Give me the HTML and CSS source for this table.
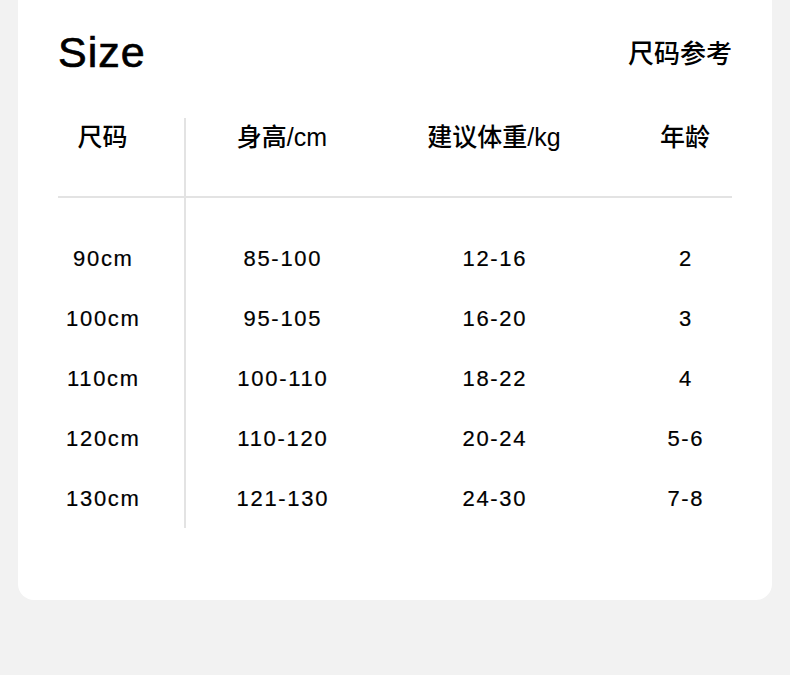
FILE: index.html
```html
<!DOCTYPE html>
<html lang="zh">
<head>
<meta charset="utf-8">
<title>Size</title>
<link rel="stylesheet" href="styles.css">
</head>
<body>
<main class="card">
  <header class="title-row">
    <h1 class="title">Size</h1>
    <span class="subtitle">尺码参考</span>
  </header>
  <div class="size-table">
    <div class="cell head first">尺码</div>
    <div class="cell head">身高/cm</div>
    <div class="cell head">建议体重/kg</div>
    <div class="cell head last">年龄</div>

    <div class="cell num first top">90cm</div>
    <div class="cell num top">85-100</div>
    <div class="cell num top">12-16</div>
    <div class="cell num last top">2</div>

    <div class="cell num first">100cm</div>
    <div class="cell num">95-105</div>
    <div class="cell num">16-20</div>
    <div class="cell num last">3</div>

    <div class="cell num first">110cm</div>
    <div class="cell num">100-110</div>
    <div class="cell num">18-22</div>
    <div class="cell num last">4</div>

    <div class="cell num first">120cm</div>
    <div class="cell num">110-120</div>
    <div class="cell num">20-24</div>
    <div class="cell num last">5-6</div>

    <div class="cell num first">130cm</div>
    <div class="cell num">121-130</div>
    <div class="cell num">24-30</div>
    <div class="cell num last">7-8</div>
  </div>
</main>
</body>
</html>
```
FILE: styles.css
```css
html, body {
  margin: 0;
  padding: 0;
}
body {
  background: #f2f2f2;
  font-family: "Liberation Sans", "Noto Sans CJK SC", sans-serif;
  color: #111;
  width: 790px;
  height: 675px;
  overflow: hidden;
}
.card {
  margin: 0 18px;
  background: #fff;
  border-radius: 0 0 16px 16px;
  padding: 27px 40px 72px;
}
.title-row {
  height: 50px;
  display: flex;
  align-items: center;
  justify-content: space-between;
  margin-bottom: 41px;
}
.title {
  margin: 0;
  font-size: 43px;
  font-weight: 400;
  line-height: 1;
  letter-spacing: 1px;
  color: #000;
  -webkit-text-stroke: 0.7px #000;
}
.subtitle {
  font-size: 26px;
  font-weight: 500;
  line-height: 1;
  margin-top: 3px;
  color: #000;
}
.size-table {
  display: grid;
  grid-template-columns: 128px 192px 232px 122px;
}
.cell {
  display: flex;
  justify-content: center;
  align-items: center;
  height: 60px;
  box-sizing: border-box;
  color: #000;
}
.cell.first {
  border-right: 2px solid #e3e3e3;
  padding-right: 37px;
}
.cell.last {
  padding-left: 28px;
}
.cell.head {
  height: 80px;
  align-items: flex-start;
  padding-top: 0;
  line-height: 38px;
  font-size: 25px;
  font-weight: 500;
  border-bottom: 2px solid #e3e3e3;
}
.cell.top {
  height: 90px;
  padding-top: 30px;
}
.cell.num {
  font-size: 22px;
  letter-spacing: 1.7px;
  text-indent: 1.7px;
  padding-top: 1px;
  -webkit-text-stroke: 0.2px #000;
}
.cell.num.top {
  padding-top: 31px;
}
```
